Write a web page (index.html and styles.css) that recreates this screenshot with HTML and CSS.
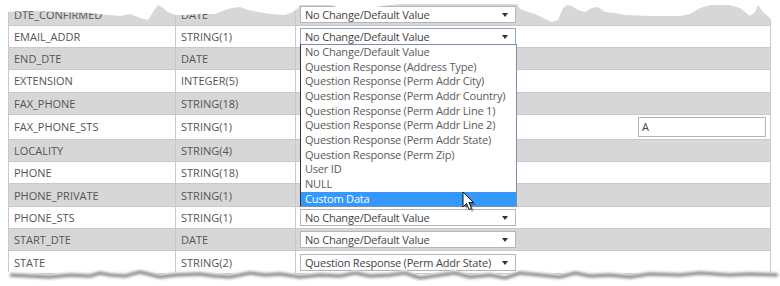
FILE: index.html
```html
<!DOCTYPE html>
<html lang="en">
<head>
    <meta charset="UTF-8">
    <title>Field Mapping</title>
    <link rel="stylesheet" href="styles.css">
</head>
<body>
    <div class="sheet">
        <div class="grid">
            <div class="row grey">
                <div class="cell">DTE_CONFIRMED</div>
                <div class="cell">DATE</div>
                <div class="cell value"><div class="select">No Change/Default Value</div></div>
            </div>
            <div class="row">
                <div class="cell">EMAIL_ADDR</div>
                <div class="cell">STRING(1)</div>
                <div class="cell value">
                    <div class="select open">No Change/Default Value
                        <!-- open list of options -->
                        <ul class="options">
                            <li>No Change/Default Value</li>
                            <li>Question Response (Address Type)</li>
                            <li>Question Response (Perm Addr City)</li>
                            <li>Question Response (Perm Addr Country)</li>
                            <li>Question Response (Perm Addr Line 1)</li>
                            <li>Question Response (Perm Addr Line 2)</li>
                            <li>Question Response (Perm Addr State)</li>
                            <li>Question Response (Perm Zip)</li>
                            <li>User ID</li>
                            <li>NULL</li>
                            <li class="active">Custom Data</li>
                        </ul>
                    </div>
                </div>
            </div>
            <div class="row grey">
                <div class="cell">END_DTE</div>
                <div class="cell">DATE</div>
                <div class="cell value"></div>
            </div>
            <div class="row">
                <div class="cell">EXTENSION</div>
                <div class="cell">INTEGER(5)</div>
                <div class="cell value"></div>
            </div>
            <div class="row grey">
                <div class="cell">FAX_PHONE</div>
                <div class="cell">STRING(18)</div>
                <div class="cell value"></div>
            </div>
            <div class="row tall">
                <div class="cell">FAX_PHONE_STS</div>
                <div class="cell">STRING(1)</div>
                <div class="cell value"><div class="text-input">A</div></div>
            </div>
            <div class="row grey">
                <div class="cell">LOCALITY</div>
                <div class="cell">STRING(4)</div>
                <div class="cell value"></div>
            </div>
            <div class="row">
                <div class="cell">PHONE</div>
                <div class="cell">STRING(18)</div>
                <div class="cell value"></div>
            </div>
            <div class="row grey">
                <div class="cell">PHONE_PRIVATE</div>
                <div class="cell">STRING(1)</div>
                <div class="cell value"></div>
            </div>
            <div class="row">
                <div class="cell">PHONE_STS</div>
                <div class="cell">STRING(1)</div>
                <div class="cell value"><div class="select">No Change/Default Value</div></div>
            </div>
            <div class="row grey">
                <div class="cell">START_DTE</div>
                <div class="cell">DATE</div>
                <div class="cell value"><div class="select">No Change/Default Value</div></div>
            </div>
            <div class="row">
                <div class="cell">STATE</div>
                <div class="cell">STRING(2)</div>
                <div class="cell value"><div class="select">Question Response (Perm Addr State)</div></div>
            </div>
        </div>

        <!-- mouse pointer over the list -->
        <svg class="pointer" width="16" height="22" viewBox="0 0 16 22">
            <path d="M2 2 L2 17 L5.5 13.5 L8 19.5 L10.5 18.5 L8 12.5 L12.5 12.5 Z" fill="#000" opacity="0.25" transform="translate(1.5 1.5)"/>
            <path d="M1 1 L1 16 L4.5 12.5 L7 18.5 L9.5 17.5 L7 11.5 L11.5 11.5 Z" fill="#fff" stroke="#111" stroke-width="1" stroke-linejoin="round"/>
        </svg>

        <!-- torn paper edges -->
        <svg class="tear tear-top" width="780" height="30" viewBox="0 0 780 30">
            <polygon fill="#fff" points="0,0 0,12 30,11 60,12 90,13 100,14 110,15 120,16 130,14 140,18 148,20 153,12 158,5 163,8 168,12 175,15 185,15 200,14 215,14 225,10 232,8 240,7 248,10 258,12 270,14 285,15 293,12 298,8 300,5 330,5 345,9 360,9 375,7 400,4 517,4 520,9 525,11 535,14 545,19 552,22 558,20 563,8 567,5 572,6 578,10 585,12 592,8 598,7 605,12 615,13 625,15 650,16 680,16 690,14 700,8 710,5 730,5 740,8 750,16 755,12 758,5 763,12 770,18 772,24 780,24 780,0"/>
        </svg>
        <svg class="tear tear-bottom" width="780" height="40" viewBox="0 250 780 40">
            <defs>
                <filter id="soft" x="-5%" y="-50%" width="110%" height="200%">
                    <feGaussianBlur stdDeviation="1.6"/>
                </filter>
            </defs>
            <polygon fill="#fff" points="0,250 8,250 8,286 780,286 780,250 772,250 772,272 750,271 730,272 700,270 680,272 650,271 630,274 610,272 590,273 575,270 560,274 540,272 520,270 505,275 490,272 470,274 455,270 440,272 420,275 405,270 390,272 370,273 355,270 340,273 320,272 300,274 280,271 265,272 250,270 230,274 215,273 200,271 175,272 160,274 148,271 140,269 125,273 110,272 100,270 90,273 70,272 50,274 30,273 10,272 8,272 8,250"/>
            <polyline filter="url(#soft)" fill="none" stroke="#7a7a7a" stroke-width="3" points="10,275 30,276 50,277 70,275 90,276 100,273 110,275 125,276 140,272 148,274 160,277 175,275 200,274 215,276 230,277 250,273 265,275 280,274 300,277 320,275 340,276 355,273 370,276 390,275 405,273 420,278 440,275 455,273 470,277 490,275 505,278 520,273 540,275 560,277 575,273 590,276 610,275 630,277 650,274 680,275 700,273 730,275 750,274 778,275"/>
        </svg>
    </div>
</body>
</html>
```

FILE: styles.css
```css
body {
    margin: 0;
    background: #fff;
    font-family: "Open Sans", "Liberation Sans", sans-serif;
    font-size: 11px;
    color: #555;
}

.sheet {
    position: relative;
    width: 780px;
    height: 286px;
    overflow: hidden;
}

.grid {
    margin-left: 8px;
    padding-top: 3.4px;
    width: 763px;
}

.row {
    display: grid;
    grid-template-columns: 167px 120px 1fr;
    height: 22.3px;
    box-sizing: border-box;
    border-left: 1px solid #c9c9c9;
    border-right: 1px solid #c9c9c9;
    border-bottom: 1px solid #c9c9c9;
    background: #fff;
}

.row.grey {
    background: #d7d7d7;
}

.row.tall {
    height: 25px;
}

.cell {
    display: flex;
    align-items: center;
    padding-left: 5px;
    border-right: 1px solid #c9c9c9;
    white-space: nowrap;
}

.cell.value {
    border-right: none;
    padding-left: 4px;
}

.select {
    position: relative;
    width: 216px;
    height: 17px;
    box-sizing: border-box;
    border: 1px solid #b5b5b5;
    background: #fff;
    padding-left: 4px;
    line-height: 15px;
    font-size: 11px;
    letter-spacing: -0.2px;
    color: #444;
}

.select:after {
    content: '';
    position: absolute;
    right: 7px;
    top: 6px;
    border-left: 3px solid transparent;
    border-right: 3px solid transparent;
    border-top: 4px solid #333;
}

.select.open {
    border-color: #8ea4c8;
}

.options {
    position: absolute;
    top: 15px;
    left: -1px;
    width: 217px;
    margin: 0;
    padding: 0;
    list-style: none;
    background: #fff;
    box-sizing: border-box;
    border: 1px solid #7d8fa8;
    border-left-color: #333;
    z-index: 2;
}

.options li {
    height: 14.7px;
    line-height: 14.7px;
    padding-left: 4px;
    color: #5a5a5a;
}

.options li.active {
    background: #3399ff;
    color: #fff;
}

.text-input {
    margin-left: auto;
    margin-right: 4px;
    width: 128px;
    height: 20px;
    box-sizing: border-box;
    border: 1px solid #b5b5b5;
    background: #fff;
    padding-left: 3px;
    line-height: 18px;
    color: #444;
}

.pointer {
    position: absolute;
    left: 462px;
    top: 191px;
    z-index: 5;
}

.tear {
    position: absolute;
    left: 0;
    z-index: 4;
}

.tear-top {
    top: 0;
}

.tear-bottom {
    top: 250px;
}
```
